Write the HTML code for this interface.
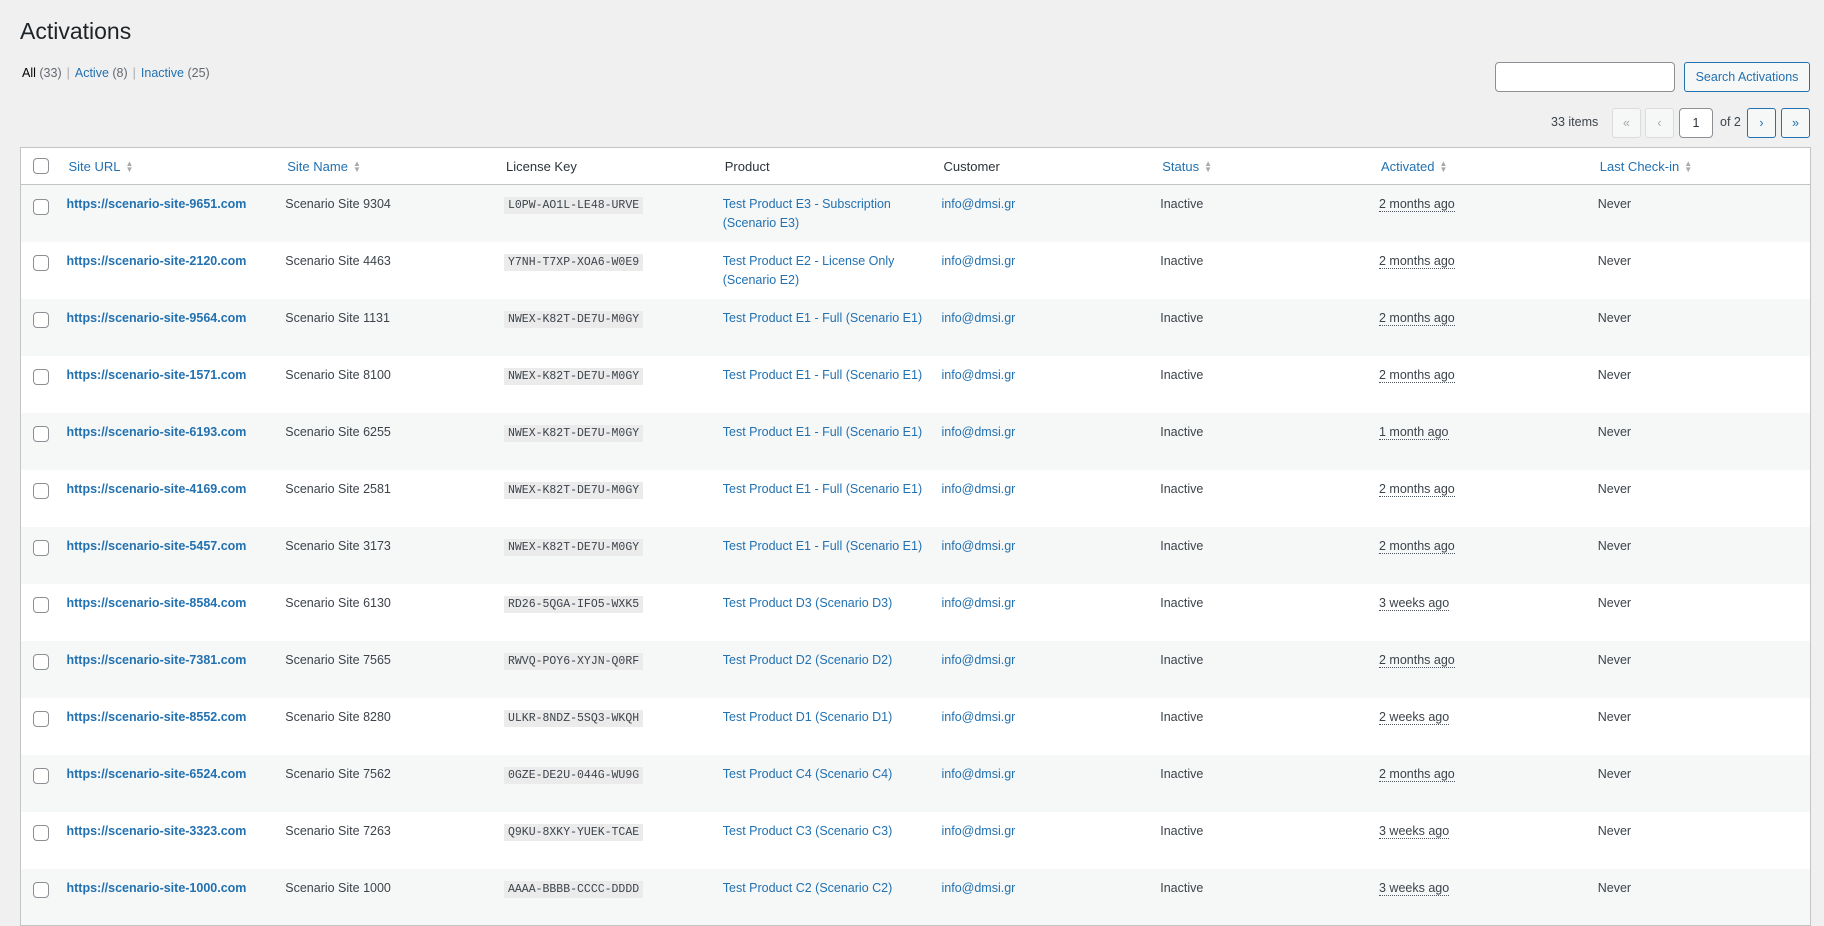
<!DOCTYPE html>
<html><head><meta charset="utf-8"><style>
*{box-sizing:border-box}
body{margin:0;background:#f0f0f1;font-family:"Liberation Sans",sans-serif;font-size:12.5px;color:#3c434a;width:1824px;height:875px;overflow:hidden;position:relative}
a{color:#2271b1;text-decoration:none}
h1{position:absolute;left:20px;top:16px;margin:0;font-size:23px;font-weight:400;color:#1d2327;line-height:30px}
.filters{position:absolute;left:22px;top:64px;line-height:18px;color:#646970;font-size:12.5px}
.filters b{color:#000;font-weight:400}
.filters .sep{margin:0 5px;color:#a7aaad}
.search{position:absolute;left:1495px;top:62px;width:180px;height:30px;border:1px solid #8c8f94;border-radius:4px;background:#fff}
.btn{position:absolute;border:1px solid #2271b1;border-radius:3px;color:#2271b1;background:#f6f7f7;text-align:center;line-height:28px;height:30px}
.btn.dis{border-color:#dcdcde;color:#a7aaad;background:#f6f7f7}
.items{position:absolute;left:1551px;top:115px}
.pg{position:absolute;left:1679px;top:108px;width:34px;height:30px;border:1px solid #8c8f94;border-radius:4px;background:#fff;text-align:center;line-height:28px;color:#2c3338}
.of{position:absolute;left:1720px;top:115px}
table{position:absolute;left:20px;top:147px;width:1791px;border:1px solid #c3c4c7;border-collapse:collapse;background:#fff;table-layout:fixed}
th{height:37px;text-align:left;font-weight:400;border-bottom:1px solid #c3c4c7;padding:0 8px;color:#2c3338;font-size:13px}
th a{color:#2271b1}
td{height:57px;vertical-align:top;padding:10px 8px 0 6px;line-height:19px;white-space:normal}
tr:nth-child(even) td{background:#f6f7f7}
.cb{width:40px;padding:0 0 0 12px}
td.cb{padding:12px 0 0 12px}
.box{display:inline-block;width:16px;height:16px;border:1px solid #8c8f94;border-radius:4px;background:#fff;vertical-align:middle}
.sort{display:inline-block;margin-left:5px;color:#a7aaad;font-size:8px;line-height:6px;vertical-align:middle}
td.url{padding-left:6px}
td.url a{font-weight:700;color:#2271b1}
code{font-family:"Liberation Mono",monospace;font-size:11.5px;background:#ebebec;padding:2px 4px;color:#3c434a}
.ago{border-bottom:1px dotted #50575e;color:#3c434a}
</style></head><body>
<h1>Activations</h1>
<div class="filters"><b>All</b> (33)<span class="sep">|</span><a href="#">Active</a> (8)<span class="sep">|</span><a href="#">Inactive</a> (25)</div>
<div class="search"></div>
<div class="btn" style="left:1684px;top:62px;width:126px">Search Activations</div>
<div class="items">33 items</div>
<div class="btn dis" style="left:1612px;top:108px;width:29px">«</div>
<div class="btn dis" style="left:1645px;top:108px;width:29px">‹</div>
<div class="pg">1</div>
<div class="of">of 2</div>
<div class="btn" style="left:1747px;top:108px;width:29px">›</div>
<div class="btn" style="left:1781px;top:108px;width:29px">»</div>
<table>
<colgroup><col style="width:40px"><col><col><col><col><col><col><col><col></colgroup>
<tr><th class="cb"><span class="box"></span></th><th><a href="#">Site URL</a><span class="sort">▲<br>▼</span></th><th><a href="#">Site Name</a><span class="sort">▲<br>▼</span></th><th>License Key</th><th>Product</th><th>Customer</th><th><a href="#">Status</a><span class="sort">▲<br>▼</span></th><th><a href="#">Activated</a><span class="sort">▲<br>▼</span></th><th><a href="#">Last Check-in</a><span class="sort">▲<br>▼</span></th></tr>
<tr><td class="cb"><span class="box"></span></td><td class="url"><a href="#">https://scenario-site-9651.com</a></td><td>Scenario Site 9304</td><td><code>L0PW-AO1L-LE48-URVE</code></td><td><a href="#">Test Product E3 - Subscription<br>(Scenario E3)</a></td><td><a href="#">info@dmsi.gr</a></td><td>Inactive</td><td><span class="ago">2 months ago</span></td><td>Never</td></tr>
<tr><td class="cb"><span class="box"></span></td><td class="url"><a href="#">https://scenario-site-2120.com</a></td><td>Scenario Site 4463</td><td><code>Y7NH-T7XP-XOA6-W0E9</code></td><td><a href="#">Test Product E2 - License Only<br>(Scenario E2)</a></td><td><a href="#">info@dmsi.gr</a></td><td>Inactive</td><td><span class="ago">2 months ago</span></td><td>Never</td></tr>
<tr><td class="cb"><span class="box"></span></td><td class="url"><a href="#">https://scenario-site-9564.com</a></td><td>Scenario Site 1131</td><td><code>NWEX-K82T-DE7U-M0GY</code></td><td><a href="#" style="white-space:nowrap">Test Product E1 - Full (Scenario E1)</a></td><td><a href="#">info@dmsi.gr</a></td><td>Inactive</td><td><span class="ago">2 months ago</span></td><td>Never</td></tr>
<tr><td class="cb"><span class="box"></span></td><td class="url"><a href="#">https://scenario-site-1571.com</a></td><td>Scenario Site 8100</td><td><code>NWEX-K82T-DE7U-M0GY</code></td><td><a href="#" style="white-space:nowrap">Test Product E1 - Full (Scenario E1)</a></td><td><a href="#">info@dmsi.gr</a></td><td>Inactive</td><td><span class="ago">2 months ago</span></td><td>Never</td></tr>
<tr><td class="cb"><span class="box"></span></td><td class="url"><a href="#">https://scenario-site-6193.com</a></td><td>Scenario Site 6255</td><td><code>NWEX-K82T-DE7U-M0GY</code></td><td><a href="#" style="white-space:nowrap">Test Product E1 - Full (Scenario E1)</a></td><td><a href="#">info@dmsi.gr</a></td><td>Inactive</td><td><span class="ago">1 month ago</span></td><td>Never</td></tr>
<tr><td class="cb"><span class="box"></span></td><td class="url"><a href="#">https://scenario-site-4169.com</a></td><td>Scenario Site 2581</td><td><code>NWEX-K82T-DE7U-M0GY</code></td><td><a href="#" style="white-space:nowrap">Test Product E1 - Full (Scenario E1)</a></td><td><a href="#">info@dmsi.gr</a></td><td>Inactive</td><td><span class="ago">2 months ago</span></td><td>Never</td></tr>
<tr><td class="cb"><span class="box"></span></td><td class="url"><a href="#">https://scenario-site-5457.com</a></td><td>Scenario Site 3173</td><td><code>NWEX-K82T-DE7U-M0GY</code></td><td><a href="#" style="white-space:nowrap">Test Product E1 - Full (Scenario E1)</a></td><td><a href="#">info@dmsi.gr</a></td><td>Inactive</td><td><span class="ago">2 months ago</span></td><td>Never</td></tr>
<tr><td class="cb"><span class="box"></span></td><td class="url"><a href="#">https://scenario-site-8584.com</a></td><td>Scenario Site 6130</td><td><code>RD26-5QGA-IFO5-WXK5</code></td><td><a href="#">Test Product D3 (Scenario D3)</a></td><td><a href="#">info@dmsi.gr</a></td><td>Inactive</td><td><span class="ago">3 weeks ago</span></td><td>Never</td></tr>
<tr><td class="cb"><span class="box"></span></td><td class="url"><a href="#">https://scenario-site-7381.com</a></td><td>Scenario Site 7565</td><td><code>RWVQ-POY6-XYJN-Q0RF</code></td><td><a href="#">Test Product D2 (Scenario D2)</a></td><td><a href="#">info@dmsi.gr</a></td><td>Inactive</td><td><span class="ago">2 months ago</span></td><td>Never</td></tr>
<tr><td class="cb"><span class="box"></span></td><td class="url"><a href="#">https://scenario-site-8552.com</a></td><td>Scenario Site 8280</td><td><code>ULKR-8NDZ-5SQ3-WKQH</code></td><td><a href="#">Test Product D1 (Scenario D1)</a></td><td><a href="#">info@dmsi.gr</a></td><td>Inactive</td><td><span class="ago">2 weeks ago</span></td><td>Never</td></tr>
<tr><td class="cb"><span class="box"></span></td><td class="url"><a href="#">https://scenario-site-6524.com</a></td><td>Scenario Site 7562</td><td><code>0GZE-DE2U-044G-WU9G</code></td><td><a href="#">Test Product C4 (Scenario C4)</a></td><td><a href="#">info@dmsi.gr</a></td><td>Inactive</td><td><span class="ago">2 months ago</span></td><td>Never</td></tr>
<tr><td class="cb"><span class="box"></span></td><td class="url"><a href="#">https://scenario-site-3323.com</a></td><td>Scenario Site 7263</td><td><code>Q9KU-8XKY-YUEK-TCAE</code></td><td><a href="#">Test Product C3 (Scenario C3)</a></td><td><a href="#">info@dmsi.gr</a></td><td>Inactive</td><td><span class="ago">3 weeks ago</span></td><td>Never</td></tr>
<tr><td class="cb"><span class="box"></span></td><td class="url"><a href="#">https://scenario-site-1000.com</a></td><td>Scenario Site 1000</td><td><code>AAAA-BBBB-CCCC-DDDD</code></td><td><a href="#">Test Product C2 (Scenario C2)</a></td><td><a href="#">info@dmsi.gr</a></td><td>Inactive</td><td><span class="ago">3 weeks ago</span></td><td>Never</td></tr>
</table>
</body></html>
